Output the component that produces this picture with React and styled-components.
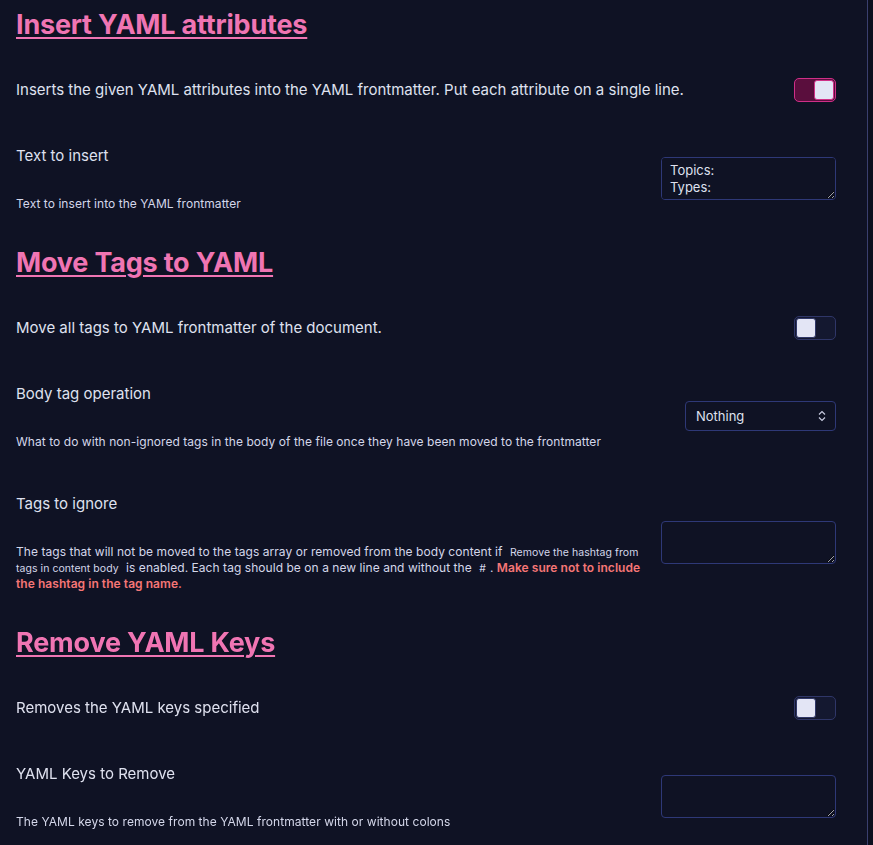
import styled, { createGlobalStyle } from "styled-components";

const Global = createGlobalStyle`
  html, body {
    margin: 0;
    background: #0c0f1e;
    color-scheme: dark;
  }
  body {
    font-family: Inter, "Noto Sans", sans-serif;
  }
`;

const Panel = styled.div`
  width: 820px;
  min-height: 100vh;
  padding: 7px 31px 0 16px;
  background: #0f1224;
  border-right: 1px solid #3a3f6e;
  color: #dfe1ef;
`;

const Heading = styled.h2`
  margin: 12px 0 14px;
  font-size: 27px;
  line-height: 36px;
  font-weight: 700;
  letter-spacing: -0.2px;
  color: #f075b3;
  text-decoration: underline;
  text-decoration-thickness: 2px;
  text-underline-offset: 3px;
  &:first-child {
    margin-top: 0;
  }
`;

const Item = styled.div`
  display: flex;
  align-items: center;
  gap: 18px;
  padding: 21px 0;
`;

const Info = styled.div`
  flex: 1;
  display: flex;
  flex-direction: column;
  gap: 28px;
`;

const Name = styled.div`
  font-size: 15px;
  line-height: 24px;
`;

const Desc = styled.div`
  font-size: 12px;
  line-height: 16px;
  letter-spacing: 0.05px;
  color: #d4d7ea;
  code {
    font-family: inherit;
    font-size: 10.5px;
    line-height: 1;
    padding: 0 4px;
  }
  strong {
    color: #f57676;
    font-weight: 600;
  }
`;

const Toggle = styled.div`
  flex: none;
  width: 42px;
  height: 24px;
  box-sizing: border-box;
  border-radius: 5px;
  border: 1px solid ${(p) => (p.on ? "#cf2f88" : "#2f3668")};
  background: ${(p) => (p.on ? "#5a0e3d" : "#141830")};
  display: flex;
  align-items: center;
  justify-content: ${(p) => (p.on ? "flex-end" : "flex-start")};
  padding: 1px;
  &::after {
    content: "";
    width: 20px;
    height: 20px;
    box-sizing: border-box;
    border-radius: 3px;
    background: #e3e5f5;
    border: 1px solid ${(p) => (p.on ? "#cf2f88" : "#2f3668")};
  }
`;

const TextArea = styled.textarea`
  flex: none;
  width: 175px;
  height: 43px;
  box-sizing: border-box;
  margin: 0;
  padding: 4px 8px;
  background: #0f1224;
  border: 1px solid #2e3877;
  border-radius: 4px;
  color: #dfe1ef;
  font-family: Inter, sans-serif;
  font-size: 13px;
  line-height: 17px;
  outline: none;
`;

const Select = styled.div`
  flex: none;
  width: 151px;
  height: 30px;
  box-sizing: border-box;
  border: 1px solid #2e3877;
  border-radius: 4px;
  padding: 0 9px 0 10px;
  display: flex;
  align-items: center;
  justify-content: space-between;
  font-size: 13px;
  color: #dfe1ef;
`;

const Chevrons = () => (
  <svg width="8" height="12" viewBox="0 0 8 12" fill="none" stroke="#c8cbe0" strokeWidth="1.2">
    <path d="M1 4.5 L4 1.5 L7 4.5" />
    <path d="M1 7.5 L4 10.5 L7 7.5" />
  </svg>
);

export default function App() {
  return (
    <>
      <Global />
      <Panel>
        <Heading>Insert YAML attributes</Heading>
        <Item>
          <Info>
            <Name>Inserts the given YAML attributes into the YAML frontmatter. Put each attribute on a single line.</Name>
          </Info>
          <Toggle on />
        </Item>
        <Item>
          <Info>
            <Name>Text to insert</Name>
            <Desc>Text to insert into the YAML frontmatter</Desc>
          </Info>
          <TextArea defaultValue={"Topics:\nTypes:"} />
        </Item>

        <Heading>Move Tags to YAML</Heading>
        <Item>
          <Info>
            <Name>Move all tags to YAML frontmatter of the document.</Name>
          </Info>
          <Toggle />
        </Item>
        <Item>
          <Info>
            <Name>Body tag operation</Name>
            <Desc>What to do with non-ignored tags in the body of the file once they have been moved to the frontmatter</Desc>
          </Info>
          <Select>
            Nothing
            <Chevrons />
          </Select>
        </Item>
        <Item>
          <Info>
            <Name>Tags to ignore</Name>
            <Desc>
              The tags that will not be moved to the tags array or removed from the body content if{" "}
              <code>Remove the hashtag from tags in content body</code> is enabled. Each tag should be on a new line and
              without the <code>#</code>. <strong>Make sure not to include the hashtag in the tag name.</strong>
            </Desc>
          </Info>
          <TextArea />
        </Item>

        <Heading>Remove YAML Keys</Heading>
        <Item>
          <Info>
            <Name>Removes the YAML keys specified</Name>
          </Info>
          <Toggle />
        </Item>
        <Item>
          <Info>
            <Name>YAML Keys to Remove</Name>
            <Desc>The YAML keys to remove from the YAML frontmatter with or without colons</Desc>
          </Info>
          <TextArea />
        </Item>
      </Panel>
    </>
  );
}
